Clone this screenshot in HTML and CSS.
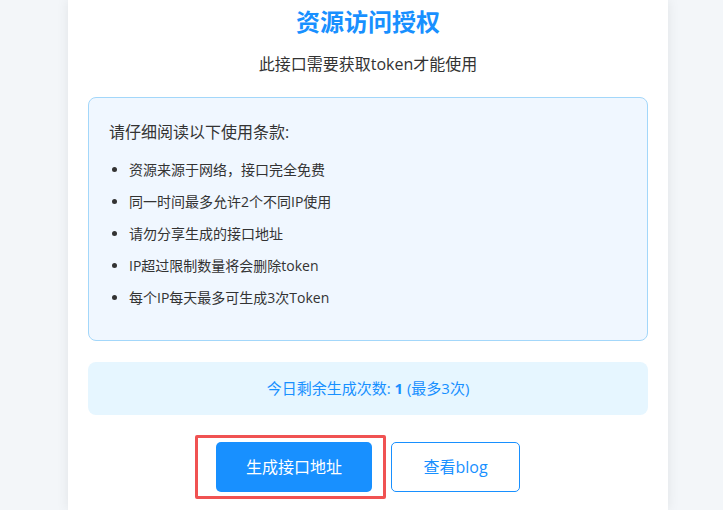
FILE: index.html
```html
<!DOCTYPE html>
<html lang="zh-CN">
<head>
<meta charset="utf-8">
<title>资源访问授权</title>
<link rel="stylesheet" href="styles.css">
</head>
<body>
<div class="card">
  <h1 class="title">资源访问授权</h1>
  <p class="subtitle">此接口需要获取token才能使用</p>
  <div class="terms">
    <h3 class="terms-head">请仔细阅读以下使用条款:</h3>
    <ul class="terms-list">
      <li>资源来源于网络，接口完全免费</li>
      <li>同一时间最多允许2个不同IP使用</li>
      <li>请勿分享生成的接口地址</li>
      <li>IP超过限制数量将会删除token</li>
      <li>每个IP每天最多可生成3次Token</li>
    </ul>
  </div>
  <div class="count">今日剩余生成次数: <strong>1</strong> (最多3次)</div>
  <div class="actions">
    <button class="btn btn-primary">生成接口地址<span class="highlight"></span></button>
    <button class="btn btn-outline">查看blog</button>
  </div>
</div>
</body>
</html>
```

FILE: styles.css
```css
html, body {
  margin: 0;
  background: #f3f6f9;
  font-family: "Open Sans", "Noto Sans CJK SC", sans-serif;
  color: #333;
}
body {
  padding: 0 0 0 13px;
  overflow: hidden;
}
.card {
  width: 560px;
  margin: 0 auto;
  padding: 6px 20px 18px;
  background: #fff;
  box-shadow: 0 0 12px rgba(0, 0, 0, 0.08);
}
.title {
  margin: 0;
  text-align: center;
  font-size: 24px;
  line-height: 32px;
  font-weight: bold;
  color: #1890ff;
}
.subtitle {
  margin: 15px 0 0;
  text-align: center;
  font-size: 16px;
  line-height: 22px;
  color: #333;
}
.terms {
  margin-top: 22px;
  background: #f0f7ff;
  border: 1px solid #a3d7fa;
  border-radius: 8px;
  padding: 22px 20px 21px;
}
.terms-head {
  margin: 0 0 15px;
  font-size: 16px;
  line-height: 24px;
  font-weight: normal;
  color: #333;
}
.terms-list {
  margin: 0;
  padding-left: 20px;
}
.terms-list li {
  font-size: 14px;
  line-height: 22px;
  margin-bottom: 10px;
  color: #333;
}
.count {
  margin-top: 21px;
  background: #e6f6ff;
  border-radius: 8px;
  padding: 15px 0;
  line-height: 23px;
  text-align: center;
  font-size: 15px;
  color: #1890ff;
}
.count strong {
  font-weight: bold;
}
.actions {
  margin-top: 27px;
  display: flex;
  justify-content: center;
  gap: 19px;
}
.btn {
  font-family: "Open Sans", "Noto Sans CJK SC", sans-serif;
  font-size: 16px;
  line-height: 22px;
  height: 50px;
  border-radius: 5px;
  cursor: pointer;
  position: relative;
}
.btn-primary {
  width: 156px;
  background: #1890ff;
  color: #fff;
  border: none;
}
.btn-outline {
  width: 129px;
  background: #fff;
  color: #1890ff;
  border: 1px solid #1890ff;
}
.highlight {
  position: absolute;
  left: -21px;
  right: -14px;
  top: -7px;
  bottom: -7px;
  border: 3px solid #f05252;
  border-radius: 2px;
  pointer-events: none;
}
```
